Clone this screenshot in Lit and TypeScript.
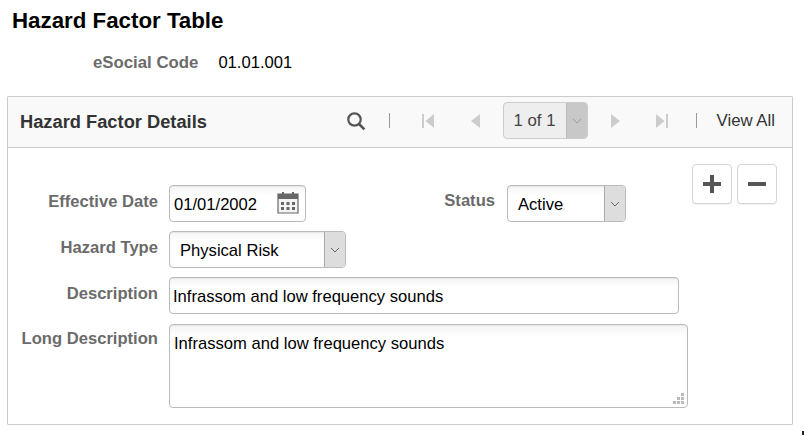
import { LitElement, html, css, svg } from "lit";
import { customElement } from "lit/decorators.js";

const chevron = svg`<svg class="chev" width="10" height="6" viewBox="0 0 10 6"><path d="M1 1l4 4 4-4" fill="none" stroke="#666" stroke-width="1"/></svg>`;

@customElement("app-root")
export class AppRoot extends LitElement {
  static styles = css`
    :host { display: block; width: 804px; height: 435px; overflow: hidden; background: #fff; font-family: "Liberation Sans", Arial, sans-serif; color: #000; font-size: 16.6px; box-sizing: border-box; position: relative; }
    * { box-sizing: border-box; }
    h1 { margin: 0; padding: 8px 0 0 12px; font-size: 22.3px; line-height: 25px; font-weight: 700; color: #000; }
    .code { display: flex; padding: 19px 0 0 93px; height: 63px; font-size: 16.6px; line-height: 22px; }
    .code b { color: #6b6b6b; margin-right: 20px; font-size: 16.8px; }
    .panel { margin-left: 7px; width: 786px; height: 329px; border: 1px solid #ccc; border-radius: 1px; }
    .head { height: 51px; background: #f9f9f9; border-bottom: 1px solid #ccc; display: flex; align-items: center; padding-left: 12px; color: #333; }
    .head h2 { margin: 0; font-size: 18.3px; font-weight: 700; flex: 1; color: #333; }
    .nav { display: flex; align-items: center; color: #333; font-size: 16.8px; margin-bottom: 3px; }
    .nav .bar { width: 1px; height: 15px; background: #999; }
    .nav svg { display: block; }
    .pager { display: flex; width: 85px; height: 37px; border: 1px solid #ccc; border-radius: 4px; background: #eee; overflow: hidden; color: #444; }
    .pager span { flex: 1; display: flex; align-items: center; justify-content: center; }
    .pager i { width: 21px; background: #c8c8c8; display: flex; align-items: center; justify-content: center; border-left: 1px solid #bbb; }
    .pager .chev path { stroke: #999; }
    .body { display: flex; justify-content: space-between; padding-right: 15px; }
    .form { padding-top: 37px; display: grid; grid-template-columns: 150px auto; column-gap: 11px; row-gap: 9px; align-content: start; }
    label { font-weight: 700; color: #6b6b6b; text-align: right; font-size: 16.6px; line-height: 18px; padding-top: 8px; white-space: nowrap; }
    .long-l { padding-top: 7px; }
    .row { display: flex; }
    .ctl { height: 37px; border: 1px solid #bbb; border-radius: 4px; background: linear-gradient(#f3f3f3, #fff 9px); display: flex; align-items: center; font-size: 16.6px; color: #000; box-shadow: inset 0 1px 1px rgba(0,0,0,.05); padding-top: 3px; }
    .date { width: 137px; padding: 3px 4px 0; justify-content: space-between; }
    .date svg { margin-right: 2px; margin-top: -6px; }
    .sel { justify-content: space-between; padding: 0 0 0 10px; overflow: hidden; }
    .sel span { padding-top: 3px; }
    .sel i { width: 21px; height: 100%; background: #ddd; border-left: 1px solid #aaa; display: flex; align-items: center; justify-content: center; }
    .statuslabel { width: 201px; padding-right: 12px; padding-top: 7px; }
    .s1 { width: 119px; }
    .s2 { width: 177px; }
    .desc { width: 510px; padding: 3px 3px 0; }
    .long { width: 519px; height: 84px; padding: 9px 4px; align-items: flex-start; position: relative; margin-top: 1px; background: linear-gradient(#f3f3f3, #fff 12px); }
    .grip { position: absolute; right: 2px; bottom: 2px; }
    .actions { display: flex; gap: 5px; padding-top: 16px; }
    .btn { width: 40px; height: 40px; border: 1px solid #d5d5d5; border-radius: 4px; background: #fff; display: flex; align-items: center; justify-content: center; box-shadow: 0 1px 1px rgba(0,0,0,.06); }
    .speck { position: absolute; left: 802px; top: 431px; width: 2px; height: 4px; background: #222; }
  `;

  render() {
    return html`
      <h1>Hazard Factor Table</h1>
      <div class="code"><b>eSocial Code</b><span>01.01.001</span></div>
      <section class="panel">
        <div class="head">
          <h2>Hazard Factor Details</h2>
          <div class="nav">
            <svg width="20" height="20" viewBox="0 0 20 20" style="margin-right:23px"><circle cx="8.5" cy="8.5" r="6.2" fill="none" stroke="#555" stroke-width="2.2"/><path d="M13 13l5.400 5.400" stroke="#555" stroke-width="2.600"/></svg>
            <span class="bar"></span>
            <svg width="12" height="14" viewBox="0 0 12 14" style="margin:0 0 0 32px"><path d="M0 0h2v14H0zM12 0v14L3.500 7z" fill="#ccc"/></svg>
            <svg width="10" height="14" viewBox="0 0 10 14" style="margin:0 23px 0 36px"><path d="M10 0v14L1 7z" fill="#ccc"/></svg>
            <div class="pager"><span>1 of 1</span><i>${chevron}</i></div>
            <svg width="10" height="14" viewBox="0 0 10 14" style="margin:0 0 0 23px"><path d="M0 0v14l9-7z" fill="#ccc"/></svg>
            <svg width="12" height="14" viewBox="0 0 12 14" style="margin:0 28px 0 35px"><path d="M12 0h-2v14h2zM0 0v14l8.500-7z" fill="#ccc"/></svg>
            <span class="bar"></span>
            <span style="margin:0 17px 0 20px">View All</span>
          </div>
        </div>
        <div class="body">
          <div class="form">
            <label>Effective Date</label>
            <div class="row">
              <div class="ctl date">01/01/2002
                <svg width="22" height="23" viewBox="0 0 22 23"><path d="M1 3h20v19H1z" fill="#f4f4f4" stroke="#666" stroke-width="1.200"/><path d="M1 3h20v5H1z" fill="#666"/><path d="M5 1h2v4H5zM15 1h2v4h-2z" fill="#666"/><path d="M4 11h3v3H4zM9.500 11h3v3h-3zM15 11h3v3h-3zM4 16h3v3H4zM9.500 16h3v3h-3zM15 16h3v3h-3z" fill="#666"/></svg>
              </div>
              <label class="statuslabel">Status</label>
              <div class="ctl sel s1"><span>Active</span><i>${chevron}</i></div>
            </div>
            <label>Hazard Type</label>
            <div class="row"><div class="ctl sel s2"><span>Physical Risk</span><i>${chevron}</i></div></div>
            <label>Description</label>
            <div class="row"><div class="ctl desc">Infrassom and low frequency sounds</div></div>
            <label class="long-l">Long Description</label>
            <div class="row"><div class="ctl long">Infrassom and low frequency sounds
              <svg class="grip" width="12" height="12" viewBox="0 0 12 12"><path d="M8 0h3v3H8zM4 4h3v3H4zM8 4h3v3H8zM0 8h3v3H0zM4 8h3v3H4zM8 8h3v3H8z" fill="#bbb"/></svg>
            </div></div>
          </div>
          <div class="actions">
            <div class="btn"><svg width="18" height="18" viewBox="0 0 18 18"><path d="M7 0h4v7h7v4h-7v7H7v-7H0V7h7z" fill="#555"/></svg></div>
            <div class="btn"><svg width="18" height="4" viewBox="0 0 18 4"><path d="M0 0h18v4H0z" fill="#555"/></svg></div>
          </div>
        </div>
      </section>
      <span class="speck"></span>
    `;
  }
}
